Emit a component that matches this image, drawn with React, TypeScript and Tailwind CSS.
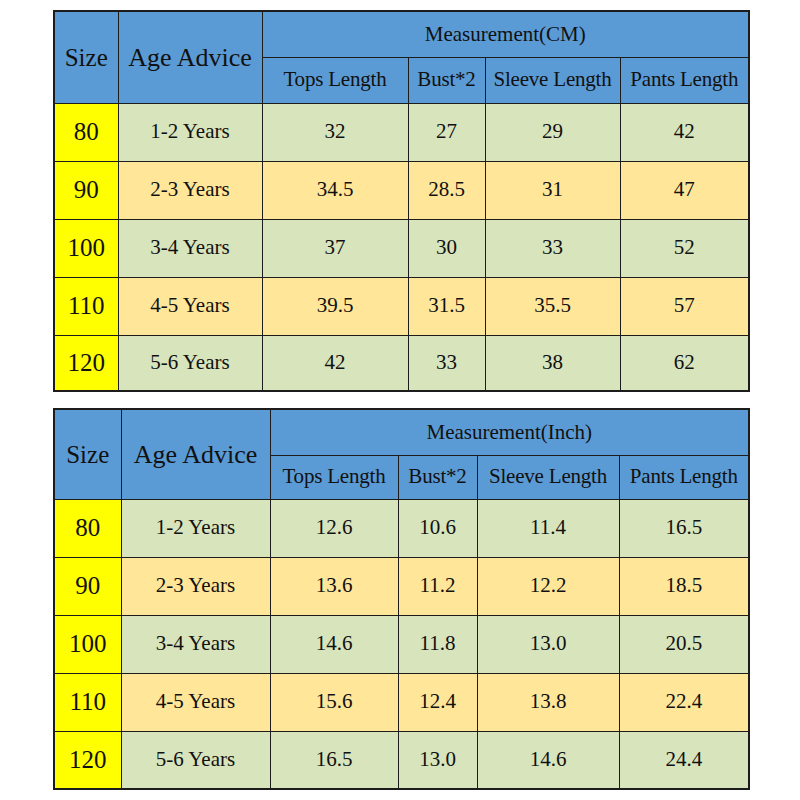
const headers = ["Tops Length", "Bust*2", "Sleeve Length", "Pants Length"];

type Row = { size: string; age: string; values: string[] };

const cmRows: Row[] = [
  { size: "80", age: "1-2 Years", values: ["32", "27", "29", "42"] },
  { size: "90", age: "2-3 Years", values: ["34.5", "28.5", "31", "47"] },
  { size: "100", age: "3-4 Years", values: ["37", "30", "33", "52"] },
  { size: "110", age: "4-5 Years", values: ["39.5", "31.5", "35.5", "57"] },
  { size: "120", age: "5-6 Years", values: ["42", "33", "38", "62"] },
];

const inchRows: Row[] = [
  { size: "80", age: "1-2 Years", values: ["12.6", "10.6", "11.4", "16.5"] },
  { size: "90", age: "2-3 Years", values: ["13.6", "11.2", "12.2", "18.5"] },
  { size: "100", age: "3-4 Years", values: ["14.6", "11.8", "13.0", "20.5"] },
  { size: "110", age: "4-5 Years", values: ["15.6", "12.4", "13.8", "22.4"] },
  { size: "120", age: "5-6 Years", values: ["16.5", "13.0", "14.6", "24.4"] },
];

function SizeTable({
  title,
  rows,
  widths,
  headHeights,
  rowHeights,
}: {
  title: string;
  rows: Row[];
  widths: number[];
  headHeights: number[];
  rowHeights: number[];
}) {
  const cell = "border border-[#1c1c1c] p-0 text-center align-middle";
  return (
    <table className="w-[695px] table-fixed border-collapse border-2 border-[#1c1c1c] text-[#111]">
      <colgroup>
        {widths.map((w, i) => (
          <col key={i} style={{ width: w }} />
        ))}
      </colgroup>
      <thead>
        <tr style={{ height: headHeights[0] }} className="bg-[#5b9bd5]">
          <th rowSpan={2} className={`${cell} text-[25px] font-normal`}>
            Size
          </th>
          <th rowSpan={2} className={`${cell} text-[26px] font-normal`}>
            Age Advice
          </th>
          <th colSpan={4} className={`${cell} text-[21px] font-normal`}>
            {title}
          </th>
        </tr>
        <tr style={{ height: headHeights[1] }} className="bg-[#5b9bd5]">
          {headers.map((h) => (
            <th key={h} className={`${cell} whitespace-nowrap text-[21px] font-normal tracking-[-0.2px]`}>
              {h}
            </th>
          ))}
        </tr>
      </thead>
      <tbody>
        {rows.map((r, i) => (
          <tr
            key={r.size}
            style={{ height: rowHeights[i] }}
            className={i % 2 === 0 ? "bg-[#d8e4bc]" : "bg-[#ffe699]"}
          >
            <td className={`${cell} bg-[#ffff00] text-[25px]`}>{r.size}</td>
            <td className={`${cell} text-[21px]`}>{r.age}</td>
            {r.values.map((v, j) => (
              <td key={j} className={`${cell} text-[21px]`}>
                {v}
              </td>
            ))}
          </tr>
        ))}
      </tbody>
    </table>
  );
}

export default function App() {
  return (
    <div
      className="flex h-[800px] w-[800px] flex-col gap-[16px] bg-white pl-[53px] pt-[10px]"
      style={{ fontFamily: '"Liberation Serif", "Times New Roman", serif' }}
    >
      <SizeTable
        title="Measurement(CM)"
        rows={cmRows}
        widths={[64, 144, 146, 77, 135, 129]}
        headHeights={[46, 46]}
        rowHeights={[58, 58, 58, 58, 56]}
      />
      <SizeTable
        title="Measurement(Inch)"
        rows={inchRows}
        widths={[67, 149, 128, 79, 142, 130]}
        headHeights={[46, 44]}
        rowHeights={[58, 58, 58, 58, 58]}
      />
    </div>
  );
}
